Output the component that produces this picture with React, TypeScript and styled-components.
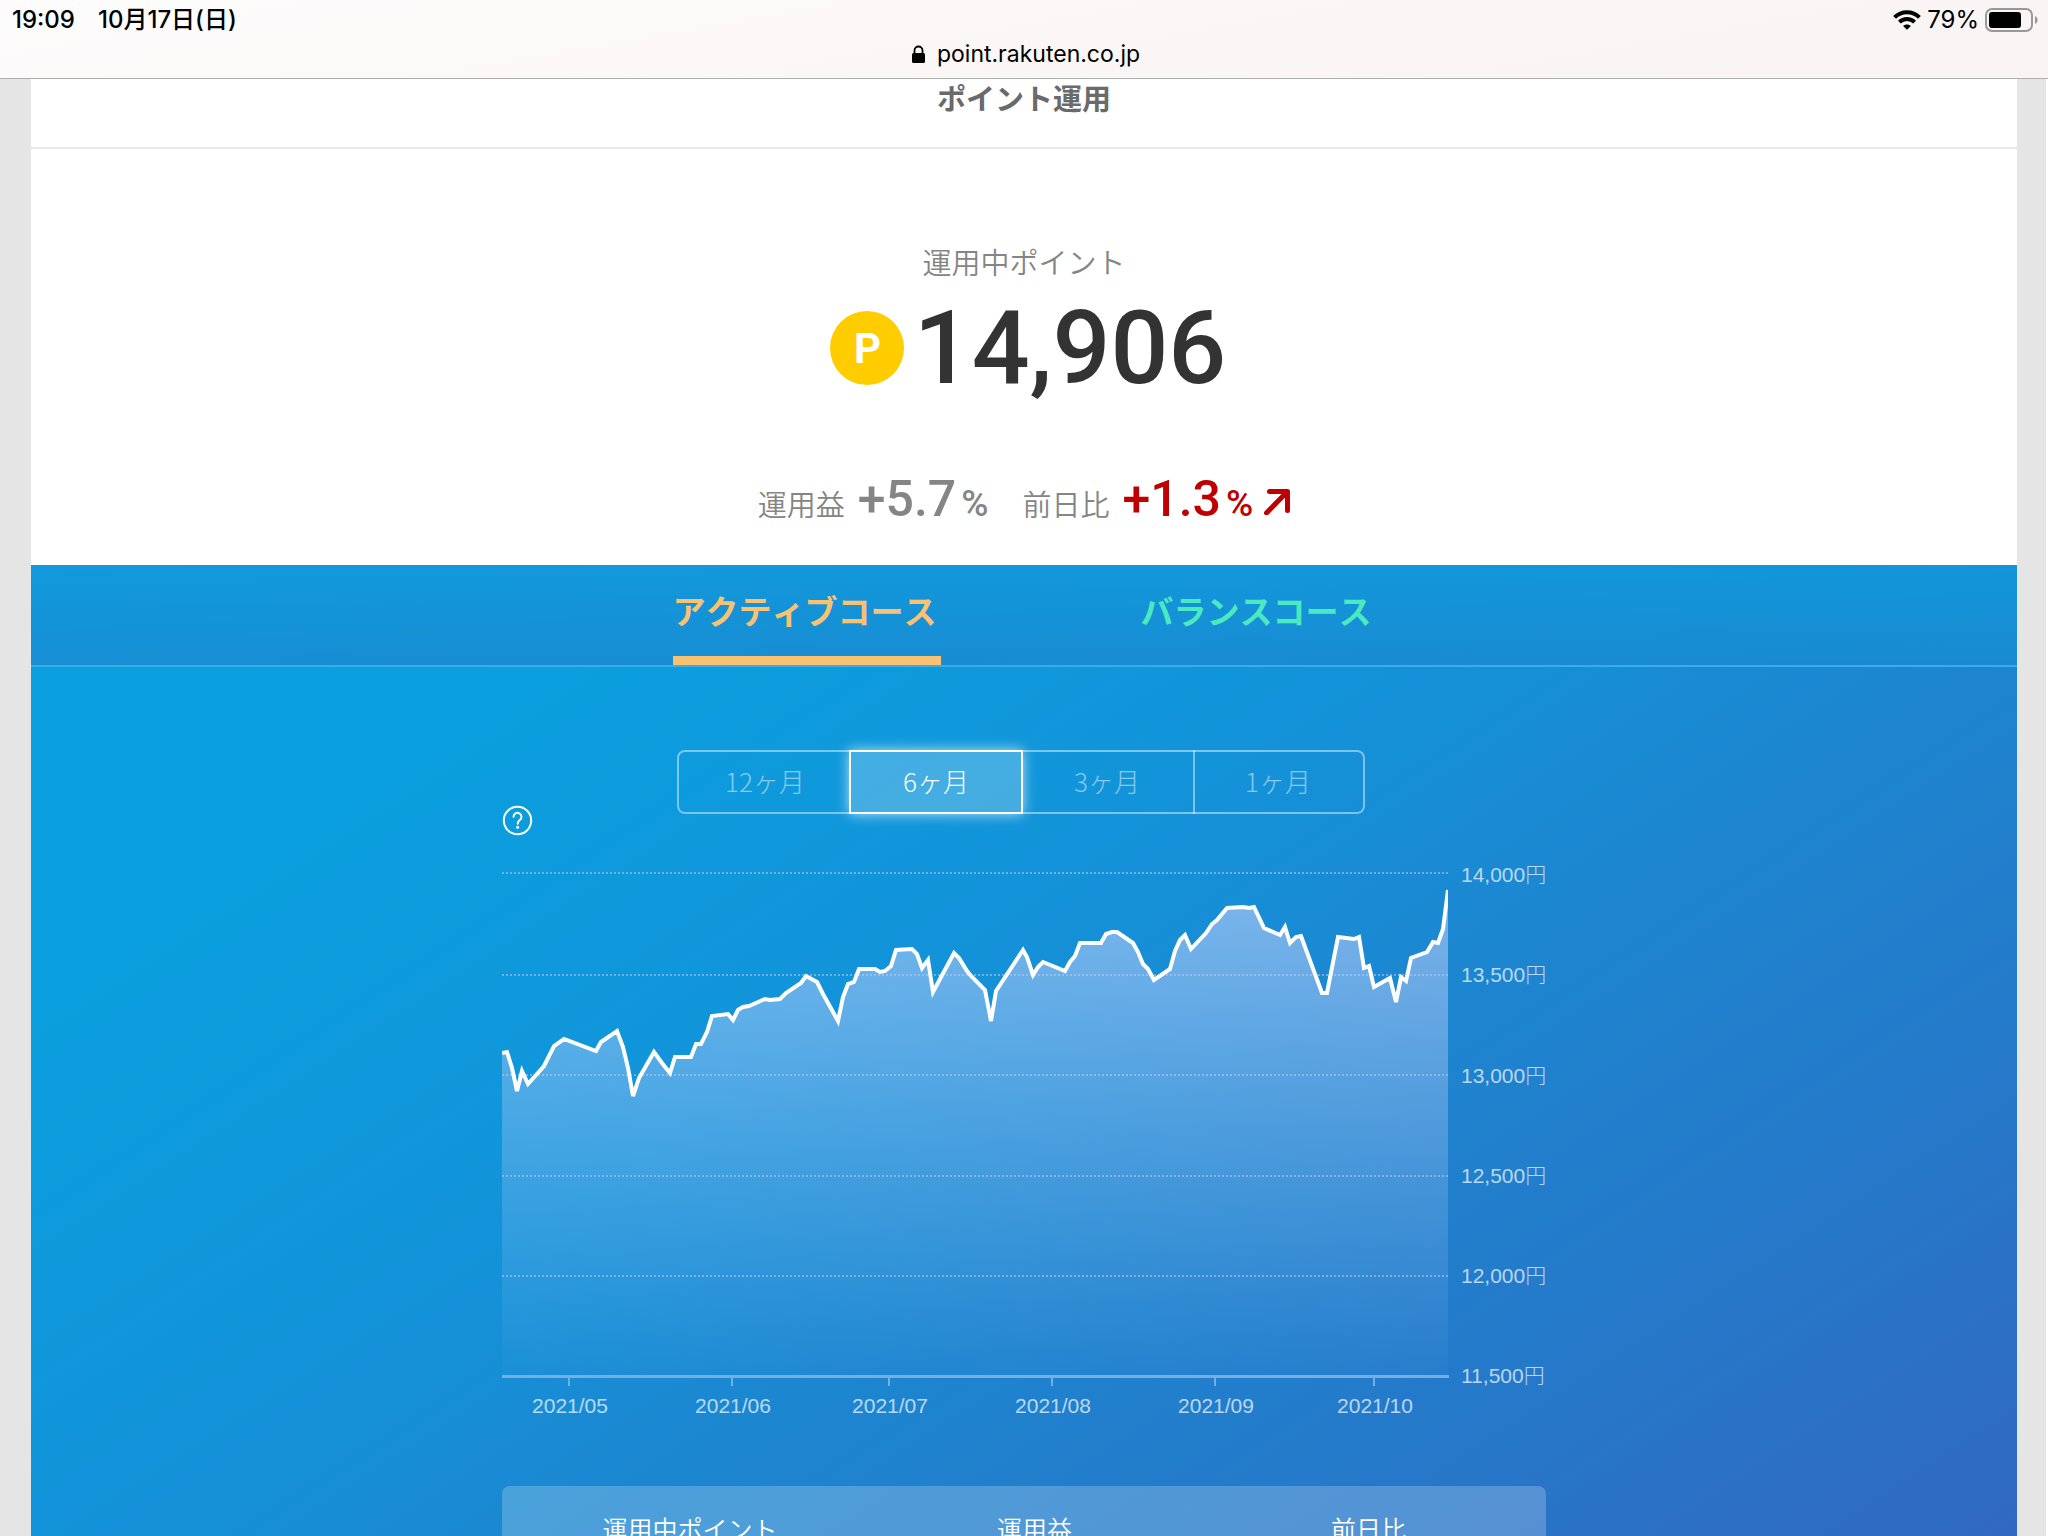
import React, { useState } from "react";
import styled, { createGlobalStyle } from "styled-components";

const JP = `"Noto Sans CJK JP", sans-serif`;
const ROBOTO = `Roboto, "Noto Sans CJK JP", sans-serif`;
const INTER = `Inter, "Noto Sans CJK JP", sans-serif`;

const GlobalStyle = createGlobalStyle`
  *, *::before, *::after { box-sizing: border-box; }
  body { margin: 0; background: #e5e5e5; font-family: ${JP}; }
  button { margin: 0; padding: 0; border: 0; background: none; font: inherit; color: inherit; cursor: pointer; }
`;

const Screen = styled.div`
  display: flex;
  flex-direction: column;
  height: 100vh;
  overflow: hidden;
`;

/* ---------- browser bar ---------- */

const BrowserBar = styled.header`
  flex: none;
  background: linear-gradient(170deg, #fdfcfc 0%, #fbf7f6 50%, #f9f4f3 100%);
  border-bottom: 1px solid #aeaeae;
  color: #000;
  font-family: ${INTER};
  font-size: 24px;
`;

const StatusLine = styled.div`
  display: flex;
  justify-content: space-between;
  align-items: center;
  height: 40px;
  padding: 0 10px 0 12px;
  font-weight: 500;
  line-height: 28px;
`;

const StatusGroup = styled.div<{ $gap: number }>`
  display: flex;
  align-items: center;
  gap: ${(p) => p.$gap}px;
`;

const StatusTime = styled.div`
  display: flex;
  align-items: baseline;
  gap: 23px;
`;

const Percent = styled.span`
  font-weight: 400;
`;

const AddressLine = styled.div`
  display: flex;
  justify-content: center;
  align-items: center;
  gap: 12px;
  height: 38px;
  padding: 0 0 10px 4px;
  font-size: 23px;
  line-height: 28px;
`;

/* ---------- page ---------- */

const Gutter = styled.div`
  flex: 1;
  display: flex;
  min-height: 0;
  padding: 0 29px 0 31px;
  border-right: 2px solid #fff;
  background: #e5e5e5;
`;

const Page = styled.main`
  flex: 1;
  display: flex;
  flex-direction: column;
  background: #fff;
`;

const TitleBar = styled.h1`
  flex: none;
  margin: 0;
  padding-bottom: 32px;
  border-bottom: 2px solid #e9e9e9;
  color: #6a6a6a;
  font-size: 29px;
  font-weight: 700;
  line-height: 36px;
  text-align: center;
`;

const Summary = styled.section`
  flex: none;
  display: flex;
  flex-direction: column;
  align-items: center;
  padding: 92px 0 36px;
`;

const SummaryLabel = styled.h2`
  margin: 0;
  color: #858585;
  font-size: 29px;
  font-weight: 350;
  line-height: 40px;
`;

const PointsRow = styled.div`
  display: flex;
  align-items: center;
  gap: 10px;
  height: 120px;
  margin-top: 7px;
  padding-left: 8px;
`;

const PointBadge = styled.span`
  display: grid;
  place-items: center;
  width: 74px;
  height: 74px;
  padding: 2px 0 0 2px;
  border-radius: 50%;
  background: #fc0;
  color: #fff;
  font-family: ${ROBOTO};
  font-size: 42px;
  font-weight: 700;
  line-height: 72px;
`;

const PointsValue = styled.strong`
  color: #333;
  font-family: ${ROBOTO};
  font-size: 102px;
  font-weight: 500;
  line-height: 120px;
`;

const Stats = styled.dl`
  display: flex;
  gap: 34px;
  margin: 61px 0 0;
`;

const Stat = styled.div`
  display: flex;
  align-items: baseline;
  gap: 13px;
  height: 60px;
  line-height: 60px;
`;

const StatLabel = styled.dt`
  color: #858585;
  font-size: 29px;
  font-weight: 350;
`;

const StatValue = styled.dd<{ $up?: boolean }>`
  display: flex;
  align-items: baseline;
  gap: 5px;
  margin: 0;
  color: ${(p) => (p.$up ? "#bf0000" : "#858585")};
  font-family: ${ROBOTO};
  font-size: 50px;
  font-weight: 500;
`;

const Unit = styled.span`
  font-size: 37px;
`;

/* ---------- course panel ---------- */

const Course = styled.section`
  flex: 1;
  display: flex;
  flex-direction: column;
  min-height: 0;
  background: linear-gradient(147deg, #0a9fde 0%, #0a9fde 20%, #1393d9 43%, #1e84cf 62%, #2678c9 80%, #3168c2 100%);
`;

const Tabs = styled.nav`
  flex: none;
  display: flex;
  justify-content: center;
  gap: 200px;
  height: 102px;
  border-bottom: 2px solid #3aace6;
  background: linear-gradient(179deg, #119adc 0%, #198ad2 100%);
`;

const Tab = styled.button<{ $color: string; $active: boolean }>`
  padding: 0 4px 2px 0;
  border-bottom: 9px solid ${(p) => (p.$active ? p.$color : "transparent")};
  color: ${(p) => p.$color};
  font-size: 33px;
  font-weight: 700;
  font-kerning: none;
  line-height: 40px;
`;

const CourseBody = styled.div`
  flex: 1;
  display: flex;
  flex-direction: column;
  width: min(1044px, 100%);
  min-height: 0;
  margin: 0 auto;
  padding-top: 83px;
`;

const ChartHeader = styled.div`
  flex: none;
  display: grid;
  grid-template-columns: 1fr auto 1fr;
  height: 86px;
  padding-right: 6px;
`;

const HelpButton = styled.button`
  align-self: end;
  justify-self: start;
  width: 31px;
  height: 31px;

  svg { display: block; }
`;

const Periods = styled.div`
  display: grid;
  grid-template-columns: repeat(4, 172px);
  height: 64px;
`;

const Period = styled.button<{ $active: boolean }>`
  margin-right: -2px;
  padding-bottom: 3px;
  border: 2px solid ${(p) => (p.$active ? "#fff" : "rgba(255, 255, 255, 0.45)")};
  border-left-width: ${(p) => (p.$active ? 2 : 0)}px;
  background: ${(p) => (p.$active ? "rgba(255, 255, 255, 0.22)" : "transparent")};
  background-clip: padding-box;
  box-shadow: ${(p) => (p.$active ? "0 0 12px rgba(255, 255, 255, 0.7)" : "none")};
  color: ${(p) => (p.$active ? "#fff" : "rgba(255, 255, 255, 0.5)")};
  font-size: 26px;
  font-weight: 300;
  line-height: 40px;

  &:first-child { border-left-width: 2px; border-right-width: 0; border-radius: 8px 0 0 8px; }
  &:last-child { margin-right: 0; border-radius: 0 8px 8px 0; }
`;

const Chart = styled.svg`
  flex: none;
  display: block;
  width: 100%;
  height: auto;

  text {
    fill: rgba(255, 255, 255, 0.7);
    font-family: "Liberation Sans", "Noto Sans CJK JP", sans-serif;
    font-size: 21px;
    font-weight: 300;
  }
`;

const Card = styled.div`
  flex: 1;
  min-height: 0;
  margin-top: 60px;
  padding-top: 22px;
  border-radius: 8px 8px 0 0;
  background: rgba(255, 255, 255, 0.21);
`;

const CardTable = styled.table`
  width: 100%;
  border-collapse: collapse;
  table-layout: fixed;
  color: #fff;
`;

const CardHead = styled.th<{ $width: number }>`
  width: ${(p) => p.$width}%;
  padding: 0;
  font-size: 25px;
  font-weight: 350;
  line-height: 40px;
  text-align: center;
`;

/* ---------- data ---------- */

const PRICE_LINE: [number, number][] = [
  [0, 217], [5, 216], [10, 232], [15, 255], [20, 235], [26, 248], [42, 230], [52, 210], [62, 203],
  [94, 215], [99, 206], [115, 195], [121, 211], [126, 232], [131, 260], [137, 242], [152, 216],
  [160, 227], [168, 237], [173, 221], [189, 221], [194, 208], [199, 208], [205, 196], [210, 180],
  [226, 178], [231, 184], [236, 174], [241, 171], [247, 170], [263, 163], [268, 164], [278, 163],
  [284, 157], [299, 147], [304, 140], [315, 146], [321, 158], [336, 185], [341, 161], [346, 148],
  [352, 146], [357, 133], [373, 133], [378, 136], [383, 135], [389, 130], [394, 114], [410, 113],
  [415, 118], [420, 132], [426, 124], [431, 156], [452, 117], [457, 122], [465, 135], [469, 140],
  [483, 154], [489, 185], [494, 155], [521, 114], [525, 121], [531, 139], [536, 131], [541, 126],
  [563, 135], [568, 126], [573, 120], [578, 107], [599, 107], [604, 98], [610, 96], [615, 96],
  [631, 107], [636, 116], [641, 128], [646, 133], [652, 144], [668, 133], [673, 115], [678, 104],
  [683, 99], [689, 113], [704, 97], [710, 88], [715, 84], [725, 72], [741, 71], [747, 72], [752, 71],
  [762, 92], [778, 99], [783, 91], [788, 107], [794, 101], [799, 100], [820, 157], [825, 157],
  [836, 101], [852, 103], [857, 101], [862, 132], [867, 130], [872, 151], [888, 142], [894, 166],
  [899, 141], [904, 145], [909, 122], [925, 116], [931, 106], [936, 107], [941, 93], [946, 54],
];

/* label, grid line, text baseline */
const Y_AXIS: [string, number, number][] = [
  ["14,000円", 37, 46], ["13,500円", 139, 146], ["13,000円", 239, 247],
  ["12,500円", 340, 347], ["12,000円", 440, 447], ["11,500円", 540, 547],
];

const X_AXIS: [string, number][] = [
  ["2021/05", 67], ["2021/06", 230], ["2021/07", 387],
  ["2021/08", 550], ["2021/09", 713], ["2021/10", 872],
];

const PERIODS = ["12ヶ月", "6ヶ月", "3ヶ月", "1ヶ月"];

const COURSES = [
  { name: "アクティブコース", color: "#f9c272" },
  { name: "バランスコース", color: "#4be9c0" },
];

/* ---------- icons ---------- */

const WifiIcon = () => (
  <svg width="28" height="20" viewBox="0 0 28 20" aria-hidden="true">
    <g fill="none" stroke="#000" strokeWidth="4">
      <path d="M1.6 7.4C8.4 .5 19.6 .5 26.4 7.4" />
      <path d="M6.4 12.1C10.6 8 17.4 8 21.6 12.1" />
    </g>
    <path d="M14 19.8l-3.9-3.9c2.2-2 5.600-2 7.800 0z" />
  </svg>
);

const BatteryIcon = () => (
  <svg width="53" height="24" viewBox="0 0 53 24" aria-hidden="true">
    <rect x="1" y="1" width="46" height="22" rx="6" fill="none" stroke="#9b9899" strokeWidth="2" />
    <rect x="4" y="4" width="32" height="16" rx="3" />
    <path d="M50 8c3.500 1.500 3.500 6.500 0 8z" fill="#9b9899" />
  </svg>
);

const LockIcon = () => (
  <svg width="13" height="18" viewBox="0 0 13 18" aria-hidden="true">
    <rect x="0" y="8" width="13" height="10" rx="1.500" />
    <path d="M2.500 9V5.500a4 4 0 0 1 8 0V9" fill="none" stroke="#000" strokeWidth="1.800" />
  </svg>
);

const UpArrowIcon = () => (
  <svg width="26" height="26" viewBox="0 0 26 26" aria-hidden="true">
    <path d="M5.500 2.500H23.500V21.500M23 3L2.500 24" fill="none" stroke="#bf0000" strokeWidth="5" strokeLinecap="round" strokeLinejoin="round" />
  </svg>
);

const ArrowSlot = styled.span`
  display: flex;
  align-self: center;
  margin-left: 6px;
`;

const HelpIcon = () => (
  <svg width="31" height="31" viewBox="0 0 31 31" fill="none" stroke="#fff" strokeWidth="2" aria-hidden="true">
    <circle cx="15.500" cy="15.500" r="13.700" />
    <path d="M11.500 11.800a4 4 0 1 1 6.200 3.400c-1.500 1-2 1.500-2 3.600" strokeLinecap="round" />
    <circle cx="15.600" cy="22.300" r="1.500" fill="#fff" stroke="none" />
  </svg>
);

const PriceChart = () => {
  const line = PRICE_LINE.map(([x, y]) => `${x},${y}`).join(" ");
  return (
    <Chart viewBox="0 0 1044 590" role="img" aria-label="基準価額の推移">
      <defs>
        <linearGradient id="area" gradientUnits="userSpaceOnUse" x1="0" y1="54" x2="0" y2="540">
          <stop offset="0" stopColor="#bccdf9" stopOpacity="0.620" />
          <stop offset="1" stopColor="#a0c8f5" stopOpacity="0.030" />
        </linearGradient>
        <clipPath id="plot"><rect x="0" y="0" width="946" height="542" /></clipPath>
      </defs>
      {Y_AXIS.slice(0, 5).map(([label, y]) => (
        <path key={label} d={`M0 ${y}H947`} stroke="#b4bfe8" strokeOpacity="0.600" strokeWidth="2" strokeDasharray="2 2" />
      ))}
      <g clipPath="url(#plot)">
        <polygon points={`0,540 ${line} 946,540`} fill="url(#area)" />
        <polyline points={line} fill="none" stroke="#fff" strokeWidth="4" />
      </g>
      <path d="M0 540.500H947" stroke="#76aee2" strokeWidth="3" />
      {X_AXIS.map(([label, x]) => (
        <g key={label}>
          <path d={`M${x} 542V550`} stroke="#76aee2" strokeWidth="2" />
          <text x={x + 1} y="577" textAnchor="middle">{label}</text>
        </g>
      ))}
      {Y_AXIS.map(([label, , baseline]) => (
        <text key={label} x="959" y={baseline}>{label}</text>
      ))}
    </Chart>
  );
};

export default function App() {
  const [course, setCourse] = useState(0);
  const [period, setPeriod] = useState(1);

  return (
    <Screen>
      <GlobalStyle />
      <BrowserBar>
        <StatusLine>
          <StatusTime>
            <span>19:09</span>
            <span>10月17日(日)</span>
          </StatusTime>
          <StatusGroup $gap={6}>
            <WifiIcon />
            <Percent>79%</Percent>
            <BatteryIcon />
          </StatusGroup>
        </StatusLine>
        <AddressLine>
          <LockIcon />
          <span>point.rakuten.co.jp</span>
        </AddressLine>
      </BrowserBar>

      <Gutter>
        <Page>
          <TitleBar>ポイント運用</TitleBar>

          <Summary>
            <SummaryLabel>運用中ポイント</SummaryLabel>
            <PointsRow>
              <PointBadge>P</PointBadge>
              <PointsValue>14,906</PointsValue>
            </PointsRow>
            <Stats>
              <Stat>
                <StatLabel>運用益</StatLabel>
                <StatValue>+5.7<Unit>%</Unit></StatValue>
              </Stat>
              <Stat>
                <StatLabel>前日比</StatLabel>
                <StatValue $up>
                  +1.3<Unit>%</Unit>
                  <ArrowSlot><UpArrowIcon /></ArrowSlot>
                </StatValue>
              </Stat>
            </Stats>
          </Summary>

          <Course>
            <Tabs>
              {COURSES.map((c, i) => (
                <Tab key={c.name} type="button" $color={c.color} $active={i === course} onClick={() => setCourse(i)}>
                  {c.name}
                </Tab>
              ))}
            </Tabs>
            <CourseBody>
              <ChartHeader>
                <HelpButton type="button" aria-label="ヘルプ"><HelpIcon /></HelpButton>
                <Periods>
                  {PERIODS.map((p, i) => (
                    <Period key={p} type="button" $active={i === period} onClick={() => setPeriod(i)}>
                      {p}
                    </Period>
                  ))}
                </Periods>
              </ChartHeader>
              <PriceChart />
              <Card>
                <CardTable>
                  <thead>
                    <tr>
                      <CardHead scope="col" $width={36}>運用中ポイント</CardHead>
                      <CardHead scope="col" $width={30}>運用益</CardHead>
                      <CardHead scope="col" $width={34}>前日比</CardHead>
                    </tr>
                  </thead>
                </CardTable>
              </Card>
            </CourseBody>
          </Course>
        </Page>
      </Gutter>
    </Screen>
  );
}
